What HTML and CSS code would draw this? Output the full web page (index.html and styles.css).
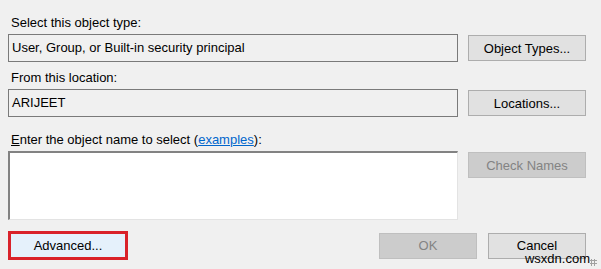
FILE: index.html
```html
<!DOCTYPE html>
<html lang="en">
<head>
    <meta charset="UTF-8">
    <title>Select Users or Groups</title>
    <link rel="stylesheet" href="styles.css">
</head>
<body>
    <div class="dialog">
        <div class="label first">Select this object type:</div>
        <div class="row">
            <div class="field">User, Group, or Built-in security principal</div>
            <button class="btn">Object Types...</button>
        </div>

        <div class="label">From this location:</div>
        <div class="row">
            <div class="field">ARIJEET</div>
            <button class="btn">Locations...</button>
        </div>

        <div class="label third"><u>E</u>nter the object name to select (<a href="#" class="link">examples</a>):</div>
        <div class="row top">
            <textarea class="names"></textarea>
            <button class="btn disabled">Check Names</button>
        </div>

        <div class="footer">
            <div class="highlight">
                <button class="btn advanced">Advanced...</button>
            </div>
            <div class="actions">
                <button class="btn disabled ok">OK</button>
                <button class="btn">Cancel</button>
            </div>
        </div>
    </div>
    <div class="watermark">wsxdn.com</div>
    <div class="grip"></div>
</body>
</html>
```

FILE: styles.css
```css
* {
    box-sizing: border-box;
    margin: 0;
    padding: 0;
}

body {
    font-family: 'Liberation Sans', Arial, sans-serif;
    font-size: 13px;
    line-height: 16px;
    background-color: #f0f0f0;
    color: #000;
    width: 601px;
    height: 269px;
    overflow: hidden;
    position: relative;
}

.dialog {
    padding: 15px 15px 0 8px;
}

.label {
    padding-left: 3px;
    margin-top: 8px;
    margin-bottom: 3px;
}

.label.first {
    margin-top: 0;
}

.label.third {
    margin-top: 15px;
}

.link {
    color: #0066cc;
}

.row {
    display: grid;
    grid-template-columns: 450px 118px;
    column-gap: 10px;
    align-items: center;
}

.row.top {
    align-items: start;
}

.field {
    height: 28px;
    border: 1px solid #7a7a7a;
    padding: 5px 3px;
    background-color: #f0f0f0;
    white-space: nowrap;
}

.names {
    height: 69px;
    border-style: solid;
    border-width: 2px 1px 1px 2px;
    border-color: #828282 #e3e3e3 #e3e3e3 #828282;
    background-color: #fff;
    resize: none;
}

.btn {
    height: 26px;
    font-family: inherit;
    font-size: 13px;
    color: #000;
    background-color: #e1e1e1;
    border: 1px solid #adadad;
    cursor: pointer;
}

.row.top .btn {
    margin-top: 1px;
}

.btn.disabled {
    background-color: #cccccc;
    border-color: #bfbfbf;
    color: #838383;
}

.footer {
    display: flex;
    justify-content: space-between;
    align-items: center;
    margin-top: 11px;
}

.highlight {
    border: 3px solid #d9222a;
    width: 120px;
    height: 29px;
}

.btn.advanced {
    display: block;
    width: 100%;
    height: 100%;
    background-color: #e5f1fb;
    border: none;
}

.actions {
    display: flex;
    gap: 11px;
}

.actions .btn {
    width: 98px;
}

.watermark {
    position: absolute;
    right: 11px;
    bottom: 3px;
    font-size: 13px;
    line-height: 14px;
}

.grip {
    position: absolute;
    right: 4px;
    bottom: 3px;
    width: 7px;
    height: 7px;
    background: radial-gradient(circle, #a0a0a0 1px, transparent 1.2px) 0 0 / 3px 3px;
}
```
